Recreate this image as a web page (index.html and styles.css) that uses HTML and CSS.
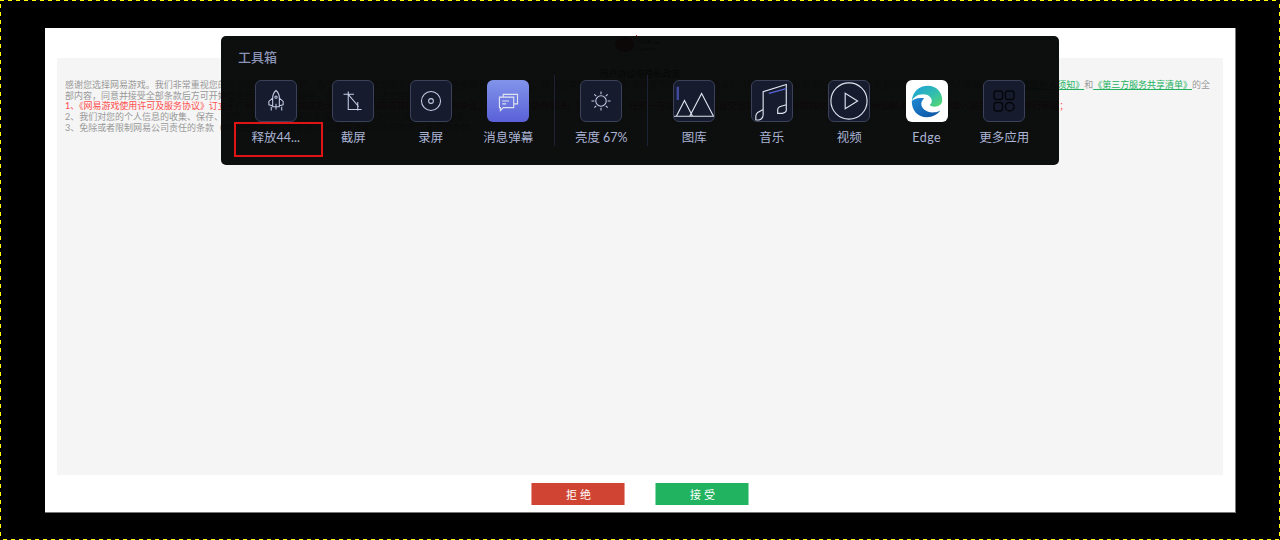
FILE: index.html
```html
<!DOCTYPE html>
<html lang="zh-CN">
<head>
  <meta charset="UTF-8">
  <title>用户协议与隐私政策</title>
  <link rel="stylesheet" href="styles.css">
</head>
<body>
  <div class="frame">
    <div class="sheet">
      <div class="logo">
        <svg width="22" height="17" viewBox="0 0 22 17"><ellipse cx="10" cy="9.500" rx="10" ry="7.500" fill="#d04a55"/><rect x="21" y="0" width="1" height="2" fill="#e03030"/></svg>
        <span>NetEase<br>Games</span>
      </div>
      <div class="terms">
        <h1>用户协议与隐私政策</h1>
        <p>感谢您选择网易游戏。我们非常重视您的个人信息和隐私保护。为了更好地保障您的个人权益，在您使用我们的产品前，请务必审慎阅读《网易游戏使用许可及服务协议》、《网易游戏隐私政策》、《儿童个人信息保护规则及监护人须知》<a href="#">《网易游戏监护人须知》</a>和<a href="#">《第三方服务共享清单》</a>的全部内容，同意并接受全部条款后方可开始使用我们的产品和服务。我们将通过上述文件向您说明：</p>
        <p class="red">1、《网易游戏使用许可及服务协议》订立于广州市天河区，如双方因本协议的内容或其执行发生任何争议，应通过友好协商解决；协商不成时，任何一方均有权将争议提交至协议订立地有管辖权的人民法院诉讼解决，并适用中华人民共和国法律进行审理；</p>
        <p>2、我们对您的个人信息的收集、保存、使用、对外提供、保护等规则条款，以及您的用户权利等条款；</p>
        <p>3、免除或者限制网易公司责任的条款（特别是粗体标注的条款），以及开发者的责任和其它重要的条款。</p>
      </div>
      <div class="actions">
        <button class="btn reject">拒绝</button>
        <button class="btn accept">接受</button>
      </div>
    </div>
  </div>

  <div class="toolbox">
    <div class="toolbox-title">工具箱</div>
    <div class="tools">
      <div class="tool">
        <div class="tile">
          <svg viewBox="0 0 42 42"><path d="M21 10c2.500 2 3.500 5 3.500 8v9h-7v-9c0-3 1-6 3.500-8zM17.500 18l-4 3.500v3.500l4 1M24.500 18l4 3.500v3.500l-4 1M16 27v4M27 27v4M21 24v6"/><circle cx="21" cy="17" r="1.200"/></svg>
        </div>
        <span>释放44...</span>
      </div>
      <div class="tool">
        <div class="tile">
          <svg viewBox="0 0 42 42"><path d="M11 14h11M16 11v19h14M26 22v9M16 14l11 13"/></svg>
        </div>
        <span>截屏</span>
      </div>
      <div class="tool">
        <div class="tile">
          <svg viewBox="0 0 42 42"><circle cx="21" cy="21" r="10"/><circle cx="21" cy="21" r="2.500"/></svg>
        </div>
        <span>录屏</span>
      </div>
      <div class="tool">
        <div class="tile tile-on">
          <svg viewBox="0 0 42 42" class="white"><path d="M16 17v-3h15v10h-4M12 17h15v11H16l-3 3v-3h-1zM15 21h7M15 24h4"/></svg>
        </div>
        <span>消息弹幕</span>
      </div>
      <div class="sep"></div>
      <div class="tool">
        <div class="tile">
          <svg viewBox="0 0 42 42"><circle cx="21" cy="21" r="5.500"/><path d="M21 11v3M21 28v3M11 21h3M28 21h3M14 14l2 2M26 26l2 2M28 14l-2 2M16 26l-2 2"/></svg>
        </div>
        <span>亮度 67%</span>
      </div>
      <div class="sep"></div>
      <div class="tool">
        <div class="tile">
          <svg viewBox="0 0 42 42" class="white"><path d="M4 6v14" stroke="#3f4a9e" stroke-width="2.500"/><path d="M0 37h42M2.500 37L11 20.500 19.500 37M16.500 37L29 13l12.500 24"/></svg>
        </div>
        <span>图库</span>
      </div>
      <div class="tool">
        <div class="tile">
          <svg viewBox="0 0 42 42" class="white"><path d="M11.700 36V11.300L36 3.700V31M11.700 30L6 33q-2 2-2 4v4h3q4-1 4.700-5M36 25l-7 2q-2 1-2 3v4h5q4-1 4-3"/><path d="M17.700 13L36 8" stroke="#5a66d8"/></svg>
        </div>
        <span>音乐</span>
      </div>
      <div class="tool">
        <div class="tile">
          <svg viewBox="0 0 42 42" class="white"><circle cx="21" cy="21" r="19"/><path d="M17 13v16l13-8z"/></svg>
        </div>
        <span>视频</span>
      </div>
      <div class="tool">
        <div class="tile tile-edge">
          <svg viewBox="0 0 42 42" class="edge">
            <defs>
              <linearGradient id="edgeTop" x1="0" y1="0" x2="1" y2="1">
                <stop offset="0" stop-color="#1b9de2"/>
                <stop offset=".6" stop-color="#35c1a8"/>
                <stop offset="1" stop-color="#5bd86a"/>
              </linearGradient>
              <linearGradient id="edgeLow" x1="0" y1="0" x2="1" y2="1">
                <stop offset="0" stop-color="#1f8ad6"/>
                <stop offset="1" stop-color="#0c4f9e"/>
              </linearGradient>
            </defs>
            <path d="M5 21C6 11 13 5 22 5c9 0 15 7 15 15 0 5-4 7-8 7-3 0-5-1-5-2 1-1 2-2 2-4 0-4-4-7-9-7-6 0-10 3-12 7z" fill="url(#edgeTop)"/>
            <path d="M5 21c0 10 6 17 16 17 6 0 11-3 14-7-3 2-6 2-8 2-7 0-12-4-12-9 0-3 2-5 3-6-7-1-11 1-13 3z" fill="url(#edgeLow)"/>
          </svg>
        </div>
        <span class="latin">Edge</span>
      </div>
      <div class="tool">
        <div class="tile">
          <svg viewBox="0 0 42 42" class="dark"><rect x="10.500" y="10.500" width="9" height="9" rx="2.500"/><rect x="22.500" y="10.500" width="9" height="9" rx="2.500"/><rect x="10.500" y="22.500" width="9" height="9" rx="2.500"/><circle cx="27" cy="27" r="4.500"/></svg>
        </div>
        <span>更多应用</span>
      </div>
    </div>
    <div class="focus"></div>
  </div>
</body>
</html>
```

FILE: styles.css
```css
* {
  box-sizing: border-box;
}
html, body {
  margin: 0;
  height: 100%;
}
body {
  background-color: #000;
  font-family: Lato, "Noto Sans CJK SC", sans-serif;
  overflow: hidden;
}
.frame {
  height: 540px;
  padding: 28px 44px 27px 45px;
  background-image:
    repeating-linear-gradient(90deg, #ff0 0 4px, transparent 4px 8px),
    repeating-linear-gradient(90deg, transparent 0 3px, #ff0 3px 7px, transparent 7px 8px),
    repeating-linear-gradient(180deg, transparent 0 4px, #ff0 4px 8px),
    repeating-linear-gradient(180deg, transparent 0 4px, #ff0 4px 8px);
  background-size: 100% 1px, 100% 1px, 1px 100%, 1px 100%;
  background-position: top left, bottom left, top left, top right;
  background-repeat: no-repeat;
}
.sheet {
  background-color: #fff;
  height: 485px;
  padding: 0 12px;
  border-right: 1px solid #777;
  border-bottom: 1px solid #777;
  display: flex;
  flex-direction: column;
}
.logo {
  height: 30px;
  padding-top: 7px;
  display: flex;
  justify-content: center;
  font-size: 6.500px;
  line-height: 7px;
  color: #333;
}
.logo span {
  width: 28px;
  padding-top: 3px;
}
.terms {
  flex: 1;
  background-color: #f5f5f5;
  padding: 10px 8px 0;
  font-size: 9px;
  line-height: 10.700px;
  letter-spacing: -0.020px;
  color: #999;
}
.terms h1 {
  margin: 0;
  font-size: 9px;
  line-height: 12px;
  font-weight: normal;
  text-align: center;
  color: #222;
}
.terms p {
  margin: 0;
}
.terms a {
  color: #22b25f;
}
.terms .red {
  color: #ff4d4d;
  letter-spacing: -0.050px;
}
.actions {
  height: 37px;
  display: flex;
  justify-content: center;
  gap: 30px;
  padding-top: 8px;
}
.btn {
  width: 94px;
  height: 22px;
  padding: 0 0 0 4px;
  color: #fff;
  border-width: 0 1px;
  border-style: solid;
  font-family: inherit;
  font-size: 11px;
  letter-spacing: 3px;
}
.reject {
  background-color: #d04434;
  border-color: #e8998f;
}
.accept {
  background-color: #22b361;
  border-color: #8dd8ad;
}
.toolbox {
  position: absolute;
  left: 221px;
  top: 36px;
  width: 838px;
  height: 129px;
  background-color: rgba(5, 6, 6, 0.97);
  border-radius: 5px;
  padding: 13px 16px 0;
}
.toolbox-title {
  font-size: 13px;
  line-height: 16px;
  font-weight: 500;
  color: #8a94b4;
  padding-left: 1px;
}
.tools {
  display: flex;
  margin-top: 15px;
}
.tool {
  width: 77.500px;
  display: flex;
  flex-direction: column;
  align-items: center;
  gap: 8px;
  color: #aab4d4;
  font-size: 12.500px;
  line-height: 16px;
}
.tile {
  width: 42px;
  height: 42px;
  border: 1px solid #3a4158;
  border-radius: 6px;
  background-color: #161c2e;
  overflow: hidden;
}
.tile svg {
  display: block;
  width: 40px;
  height: 40px;
  fill: none;
  stroke: #c5cde8;
  stroke-width: 1.100;
}
.tile svg.white {
  stroke: #dfe3ee;
  stroke-width: 1.200;
}
.tile svg.dark {
  stroke: #05060a;
  stroke-width: 1.500;
}
.tile svg.edge {
  stroke: none;
}
.tile-on {
  border: none;
  background: linear-gradient(#8194ea, #5a60d8);
}
.tile-on svg {
  margin: 1px;
}
.tile-edge {
  border: none;
  background-color: #fff;
}
.tile-edge svg {
  margin: 1px;
}
.latin {
  letter-spacing: 0.500px;
}
.sep {
  width: 1px;
  height: 71px;
  margin: -5px 7.250px 0;
  background-color: #1c2233;
}
.focus {
  position: absolute;
  left: 13px;
  top: 86px;
  width: 89px;
  height: 35px;
  border: 2px solid #e01414;
}
```
